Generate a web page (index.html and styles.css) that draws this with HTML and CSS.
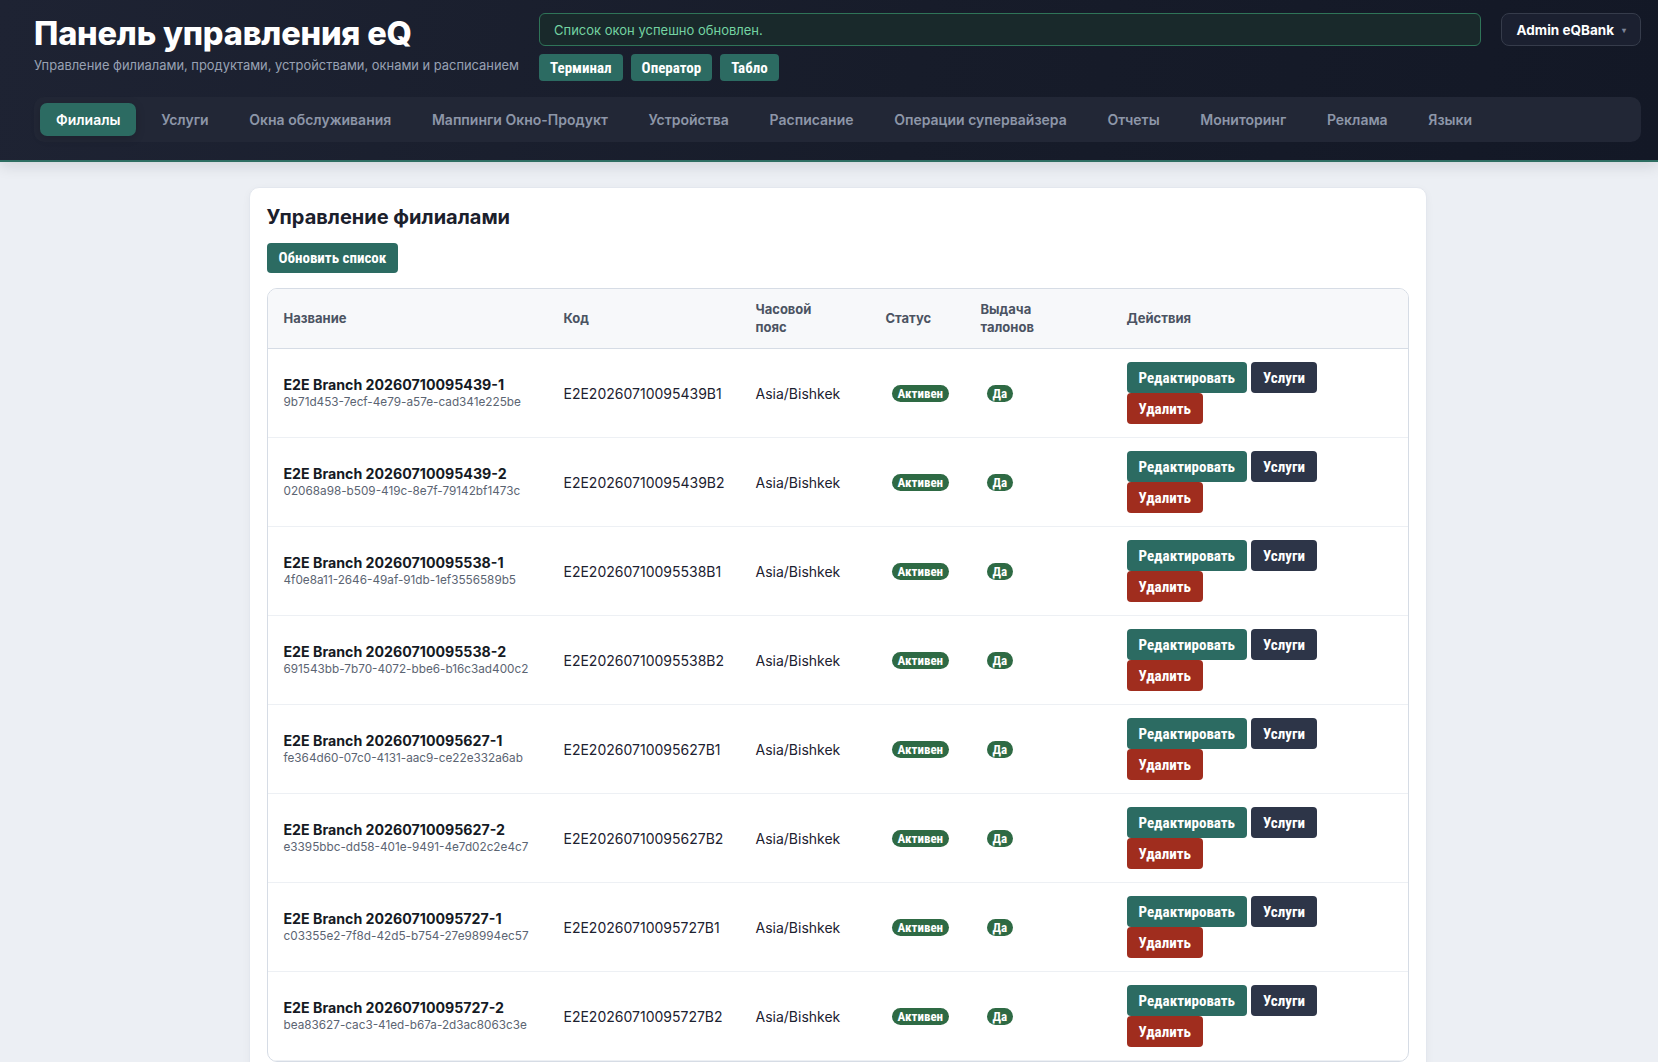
FILE: index.html
```html
<!DOCTYPE html>
<html lang="ru">
<head>
  <meta charset="UTF-8" />
  <meta name="viewport" content="width=device-width, initial-scale=1.0"/>
  <title>Панель управления eQ</title>
  <link rel="stylesheet" href="styles.css">
</head>
<body>
  <!-- Top bar -->
  <header class="topbar">
    <div class="topbar-row">
      <div class="brand">
        <h1>Панель управления eQ</h1>
        <p>Управление филиалами, продуктами, устройствами, окнами и расписанием</p>
      </div>

      <div class="topbar-center">
        <div class="alert-success">Список окон успешно обновлен.</div>
        <div class="quick-links">
          <button class="btn btn-teal">Терминал</button>
          <button class="btn btn-teal">Оператор</button>
          <button class="btn btn-teal">Табло</button>
        </div>
      </div>

      <button class="user-menu">Admin eQBank <span class="caret">▾</span></button>
    </div>

    <nav class="tabs">
      <a class="tab active">Филиалы</a>
      <a class="tab">Услуги</a>
      <a class="tab">Окна обслуживания</a>
      <a class="tab">Маппинги Окно-Продукт</a>
      <a class="tab">Устройства</a>
      <a class="tab">Расписание</a>
      <a class="tab">Операции супервайзера</a>
      <a class="tab">Отчеты</a>
      <a class="tab">Мониторинг</a>
      <a class="tab">Реклама</a>
      <a class="tab">Языки</a>
    </nav>
  </header>

  <!-- Branches -->
  <main class="content">
    <section class="card">
      <h2>Управление филиалами</h2>
      <button class="btn btn-teal btn-refresh">Обновить список</button>

      <div class="table-wrap">
        <table class="branches">
          <thead>
            <tr>
              <th class="col-name">Название</th>
              <th class="col-code">Код</th>
              <th class="col-tz"><span class="th-narrow">Часовой пояс</span></th>
              <th class="col-status">Статус</th>
              <th class="col-tickets"><span class="th-narrow">Выдача талонов</span></th>
              <th>Действия</th>
            </tr>
          </thead>
          <tbody>
            <tr>
              <td><div class="branch-name">E2E Branch 20260710095439-1</div><div class="branch-id">9b71d453-7ecf-4e79-a57e-cad341e225be</div></td>
              <td>E2E20260710095439B1</td>
              <td>Asia/Bishkek</td>
              <td><span class="badge">Активен</span></td>
              <td><span class="badge">Да</span></td>
              <td><div class="actions"><button class="btn btn-teal">Редактировать</button><button class="btn btn-dark">Услуги</button><button class="btn btn-red">Удалить</button></div></td>
            </tr>
            <tr>
              <td><div class="branch-name">E2E Branch 20260710095439-2</div><div class="branch-id">02068a98-b509-419c-8e7f-79142bf1473c</div></td>
              <td>E2E20260710095439B2</td>
              <td>Asia/Bishkek</td>
              <td><span class="badge">Активен</span></td>
              <td><span class="badge">Да</span></td>
              <td><div class="actions"><button class="btn btn-teal">Редактировать</button><button class="btn btn-dark">Услуги</button><button class="btn btn-red">Удалить</button></div></td>
            </tr>
            <tr>
              <td><div class="branch-name">E2E Branch 20260710095538-1</div><div class="branch-id">4f0e8a11-2646-49af-91db-1ef3556589b5</div></td>
              <td>E2E20260710095538B1</td>
              <td>Asia/Bishkek</td>
              <td><span class="badge">Активен</span></td>
              <td><span class="badge">Да</span></td>
              <td><div class="actions"><button class="btn btn-teal">Редактировать</button><button class="btn btn-dark">Услуги</button><button class="btn btn-red">Удалить</button></div></td>
            </tr>
            <tr>
              <td><div class="branch-name">E2E Branch 20260710095538-2</div><div class="branch-id">691543bb-7b70-4072-bbe6-b16c3ad400c2</div></td>
              <td>E2E20260710095538B2</td>
              <td>Asia/Bishkek</td>
              <td><span class="badge">Активен</span></td>
              <td><span class="badge">Да</span></td>
              <td><div class="actions"><button class="btn btn-teal">Редактировать</button><button class="btn btn-dark">Услуги</button><button class="btn btn-red">Удалить</button></div></td>
            </tr>
            <tr>
              <td><div class="branch-name">E2E Branch 20260710095627-1</div><div class="branch-id">fe364d60-07c0-4131-aac9-ce22e332a6ab</div></td>
              <td>E2E20260710095627B1</td>
              <td>Asia/Bishkek</td>
              <td><span class="badge">Активен</span></td>
              <td><span class="badge">Да</span></td>
              <td><div class="actions"><button class="btn btn-teal">Редактировать</button><button class="btn btn-dark">Услуги</button><button class="btn btn-red">Удалить</button></div></td>
            </tr>
            <tr>
              <td><div class="branch-name">E2E Branch 20260710095627-2</div><div class="branch-id">e3395bbc-dd58-401e-9491-4e7d02c2e4c7</div></td>
              <td>E2E20260710095627B2</td>
              <td>Asia/Bishkek</td>
              <td><span class="badge">Активен</span></td>
              <td><span class="badge">Да</span></td>
              <td><div class="actions"><button class="btn btn-teal">Редактировать</button><button class="btn btn-dark">Услуги</button><button class="btn btn-red">Удалить</button></div></td>
            </tr>
            <tr>
              <td><div class="branch-name">E2E Branch 20260710095727-1</div><div class="branch-id">c03355e2-7f8d-42d5-b754-27e98994ec57</div></td>
              <td>E2E20260710095727B1</td>
              <td>Asia/Bishkek</td>
              <td><span class="badge">Активен</span></td>
              <td><span class="badge">Да</span></td>
              <td><div class="actions"><button class="btn btn-teal">Редактировать</button><button class="btn btn-dark">Услуги</button><button class="btn btn-red">Удалить</button></div></td>
            </tr>
            <tr>
              <td><div class="branch-name">E2E Branch 20260710095727-2</div><div class="branch-id">bea83627-cac3-41ed-b67a-2d3ac8063c3e</div></td>
              <td>E2E20260710095727B2</td>
              <td>Asia/Bishkek</td>
              <td><span class="badge">Активен</span></td>
              <td><span class="badge">Да</span></td>
              <td><div class="actions"><button class="btn btn-teal">Редактировать</button><button class="btn btn-dark">Услуги</button><button class="btn btn-red">Удалить</button></div></td>
            </tr>
          </tbody>
        </table>
      </div>
    </section>
  </main>
</body>
</html>
```

FILE: styles.css
```css
/* ---------- base ---------- */
* {
  margin: 0;
  padding: 0;
  box-sizing: border-box;
}

body {
  font-family: Inter, "Noto Sans", sans-serif;
  background: #eceff4;
  color: #1c2130;
}

/* ---------- top bar ---------- */
.topbar {
  background: linear-gradient(100deg, #1e2333 0%, #171c2a 55%, #131826 100%);
  border-bottom: 2px solid #2e6e62;
  padding: 13px 17px 18px 34px;
  box-shadow: 0 4px 14px rgba(15, 20, 35, 0.12);
}

.topbar-row {
  display: flex;
  align-items: flex-start;
  gap: 20px;
}

.brand {
  padding-top: 3px;
  width: 485px;
}
.brand h1 {
  font-size: 32.5px;
  line-height: 35px;
  font-weight: 800;
  color: #fff;
  letter-spacing: -0.2px;
  margin-bottom: 6px;
  white-space: nowrap;
}
.brand p {
  font-size: 12.9px;
  line-height: 18px;
  color: #98a1b3;
  white-space: nowrap;
}

.topbar-center {
  flex: 1;
}

.alert-success {
  height: 33px;
  padding: 0 14px;
  display: flex;
  align-items: center;
  border: 1px solid #2f7458;
  border-radius: 6px;
  background: #19292b;
  color: #74d3a2;
  font-size: 13px;
}

.quick-links {
  display: flex;
  gap: 8px;
  margin-top: 8px;
}
.quick-links .btn {
  height: 27px;
  padding: 0 11px;
}

.user-menu {
  height: 33px;
  padding: 0 14px 0 15px;
  border: 1px solid #363c4b;
  border-radius: 8px;
  background: #1b2030;
  color: #fff;
  font-family: Inter, sans-serif;
  font-size: 13.5px;
  font-weight: 700;
  display: flex;
  align-items: center;
  gap: 8px;
}
.user-menu .caret {
  font-size: 8px;
  color: #7c8496;
}

/* ---------- tabs ---------- */
.tabs {
  margin-top: 16px;
  display: flex;
  gap: 8.7px;
  padding: 6px;
  background: #222736;
  border-radius: 10px;
}
.tab {
  height: 33px;
  padding: 0 16px;
  display: flex;
  align-items: center;
  border-radius: 7px;
  font-size: 14px;
  font-weight: 600;
  color: #8d96a8;
  white-space: nowrap;
}
.tab.active {
  background: #2c6b62;
  color: #fff;
  box-shadow: 0 2px 10px rgba(0, 0, 0, 0.18);
}

/* ---------- buttons ---------- */
.btn {
  border: none;
  border-radius: 4px;
  color: #fff;
  font-family: "Liberation Sans Narrow", "Roboto Condensed", Roboto, sans-serif;
  font-size: 15px;
  font-weight: 700;
  cursor: pointer;
  white-space: nowrap;
}
.btn-teal { background: #2c6b62; }
.btn-dark { background: #2d3548; }
.btn-red  { background: #a02d1e; }

/* ---------- content ---------- */
.content {
  padding: 25px 0 40px 17px;
}

.card {
  max-width: 1178px;
  margin: 0 auto;
  background: #fff;
  border: 1px solid #e3e7ee;
  border-radius: 10px;
  padding: 17px 17px 18px;
  box-shadow: 0 2px 8px rgba(20, 30, 50, 0.04);
}
.card h2 {
  font-size: 20px;
  line-height: 24px;
  font-weight: 700;
  color: #1b202c;
}

.btn-refresh {
  margin-top: 14px;
  height: 30px;
  padding: 0 12px;
}

.table-wrap {
  margin-top: 15px;
  border: 1px solid #d6dce5;
  border-radius: 10px;
  overflow: hidden;
}

.branches {
  width: 100%;
  border-collapse: collapse;
  table-layout: fixed;
}
.branches th {
  background: #f7f8fa;
  text-align: left;
  padding: 12px 16px;
  font-size: 13px;
  line-height: 17.5px;
  font-weight: 700;
  color: #4b5362;
  border-bottom: 1px solid #d6dce5;
  vertical-align: middle;
}
.th-narrow {
  display: block;
  max-width: 64px;
}
.branches td {
  padding: 13px 16px;
  font-size: 14px;
  color: #1c2130;
  border-bottom: 1px solid #edf0f4;
  vertical-align: middle;
}

.col-name    { width: 280px; }
.col-code    { width: 192px; }
.col-tz      { width: 130px; }
.col-status  { width: 95px; }
.col-tickets { width: 146px; }

.branch-name {
  font-weight: 700;
  font-size: 14.2px;
  line-height: 18px;
  color: #151a24;
}
.branch-id {
  font-size: 11.75px;
  line-height: 16px;
  color: #5b6472;
}

.badge {
  display: inline-block;
  margin-left: 6px;
  padding: 0 6px;
  height: 17px;
  line-height: 17px;
  border-radius: 9px;
  background: #2e6a44;
  color: #fff;
  font-family: "Liberation Sans Narrow", "Roboto Condensed", Roboto, sans-serif;
  font-size: 13px;
  font-weight: 700;
}

.actions {
  display: flex;
  flex-wrap: wrap;
  column-gap: 4px;
  max-width: 230px;
}
.actions .btn {
  height: 31px;
  padding: 0 12px;
}
```
